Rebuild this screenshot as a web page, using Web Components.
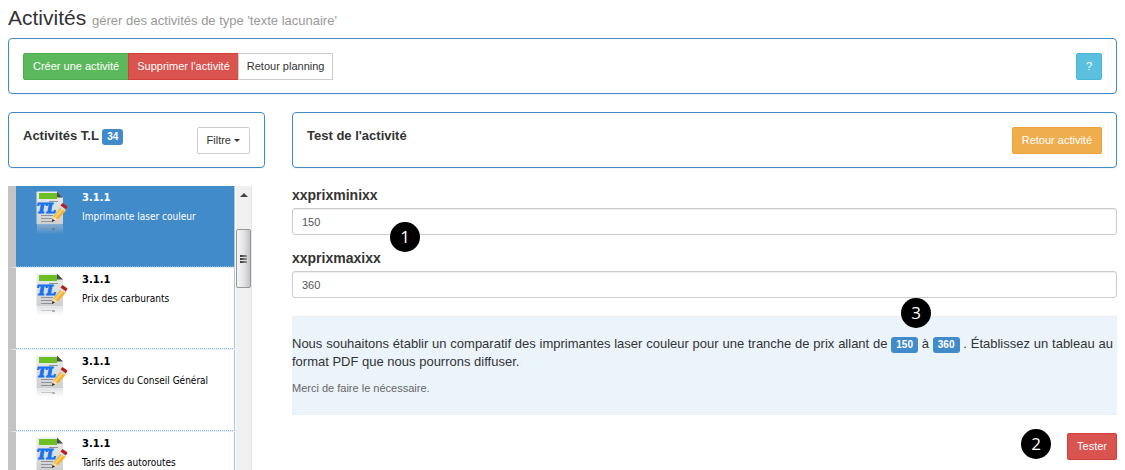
<!DOCTYPE html>
<html lang="fr">
<head>
<meta charset="utf-8">
<meta name="viewport" content="width=device-width, initial-scale=1">
<title>Activités</title>
<style>
    body {
        margin: 0;
        background-color: #fff;
        font-family: "Liberation Sans", Arial, sans-serif;
        font-size: 13px;
        line-height: 18px;
        color: #333;
    }
</style>
</head>
<body>
<app-activites></app-activites>

<script>
class AppBoton extends HTMLElement {
    constructor() {
        super();
        let shadowRoot = this.attachShadow({ mode: 'open' });
        shadowRoot.innerHTML = this.template;
    }
    get template() {
        return `
        <style>
            :host {
                display: inline-block;
                flex: none;
                --fondo: #fff;
                --borde: #ccc;
                --texto: #333;
            }
            :host([tipo="success"]) {
                --fondo: #5cb85c;
                --borde: #4cae4c;
                --texto: #fff;
            }
            :host([tipo="danger"]) {
                --fondo: #d9534f;
                --borde: #d43f3a;
                --texto: #fff;
            }
            :host([tipo="warning"]) {
                --fondo: #f0ad4e;
                --borde: #eea236;
                --texto: #fff;
            }
            :host([tipo="info"]) {
                --fondo: #5bc0de;
                --borde: #46b8da;
                --texto: #fff;
            }
            button {
                display: flex;
                align-items: center;
                gap: 3px;
                margin: 0;
                padding: 5px var(--relleno, 9px);
                border: 1px solid var(--borde);
                border-radius: var(--radio, 2px);
                background-color: var(--fondo);
                color: var(--texto);
                font: 11px/15px "Liberation Sans", Arial, sans-serif;
                white-space: nowrap;
                cursor: pointer;
            }
            button:hover {
                filter: brightness(0.93);
            }
            .caret {
                display: none;
                border-top: 3px solid currentColor;
                border-left: 3px solid transparent;
                border-right: 3px solid transparent;
            }
            :host([desplegable]) .caret {
                display: block;
            }
        </style>
        <button type="button"><span><slot></slot></span><i class="caret"></i></button>`;
    }
}
window.customElements.define("app-boton", AppBoton);

class AppGrupo extends HTMLElement {
    constructor() {
        super();
        let shadowRoot = this.attachShadow({ mode: 'open' });
        shadowRoot.innerHTML = this.template;
    }
    get template() {
        return `
        <style>
            :host {
                display: flex;
                --relleno: 8px;
            }
            ::slotted(*) {
                --radio: 0;
            }
            ::slotted(:first-child) {
                --radio: 2px 0 0 2px;
                --relleno: 9px;
            }
            ::slotted(:not(:first-child)) {
                margin-left: -1px;
            }
        </style>
        <slot></slot>`;
    }
}
window.customElements.define("app-grupo", AppGrupo);

class AppPanel extends HTMLElement {
    constructor() {
        super();
        let shadowRoot = this.attachShadow({ mode: 'open' });
        shadowRoot.innerHTML = this.template;
    }
    get template() {
        return `
        <style>
            :host {
                display: flex;
                justify-content: space-between;
                align-items: flex-start;
                padding: 14px 14px 13px;
                border: 1px solid #428bca;
                border-radius: 4px;
                background-color: #fff;
                box-shadow: 0 1px 1px rgba(0, 0, 0, 0.05);
            }
        </style>
        <slot></slot>
        <slot name="acciones"></slot>`;
    }
}
window.customElements.define("app-panel", AppPanel);

class AppEtiqueta extends HTMLElement {
    constructor() {
        super();
        let shadowRoot = this.attachShadow({ mode: 'open' });
        shadowRoot.innerHTML = this.template;
    }
    get template() {
        return `
        <style>
            :host {
                display: inline-block;
                padding: 0 5px;
                border-radius: 3px;
                background-color: #428bca;
                color: #fff;
                font-size: 10px;
                font-weight: bold;
                line-height: 16px;
                vertical-align: bottom;
            }
        </style>
        <slot></slot>`;
    }
}
window.customElements.define("app-etiqueta", AppEtiqueta);

class AppPaso extends HTMLElement {
    constructor() {
        super();
        let shadowRoot = this.attachShadow({ mode: 'open' });
        shadowRoot.innerHTML = this.template;
    }
    get template() {
        return `
        <style>
            :host {
                display: block;
                width: 30px;
                height: 30px;
                border-radius: 50%;
                background-color: #000;
                color: #fff;
                font: 17px/29px "Open Sans", "Noto Sans", sans-serif;
                text-align: center;
            }
        </style>
        <slot></slot>`;
    }
}
window.customElements.define("app-paso", AppPaso);

class AppCampo extends HTMLElement {
    constructor() {
        super();
        let shadowRoot = this.attachShadow({ mode: 'open' });
        shadowRoot.innerHTML = this.template;
    }
    get template() {
        return `
        <style>
            :host {
                display: block;
                position: relative;
            }
            label {
                display: block;
                margin-bottom: 4px;
                font-size: 14px;
                font-weight: bold;
            }
            input {
                display: block;
                box-sizing: border-box;
                width: 100%;
                height: 27px;
                margin: 0;
                padding: 5px 9px;
                border: 1px solid #ccc;
                border-radius: 3px;
                background-color: #fff;
                box-shadow: inset 0 1px 1px rgba(0, 0, 0, 0.075);
                color: #555;
                font: 11px/15px "Liberation Sans", Arial, sans-serif;
            }
            /* marcador sobre el borde del campo */
            ::slotted(app-paso) {
                position: absolute;
                left: 98px;
                bottom: -17px;
                z-index: 1;
            }
        </style>
        <label for="campo">${this.getAttribute("etiqueta")}</label>
        <input id="campo" type="text" value="${this.getAttribute("valor")}">
        <slot></slot>`;
    }
}
window.customElements.define("app-campo", AppCampo);

class IconoTexto extends HTMLElement {
    constructor() {
        super();
        let shadowRoot = this.attachShadow({ mode: 'open' });
        shadowRoot.innerHTML = this.template;
    }
    get template() {
        return `
        <style>
            :host {
                display: block;
                width: 32px;
                height: 44px;
            }
            svg {
                display: block;
            }
        </style>
        <svg width="32" height="44" viewBox="0 0 32 44" aria-hidden="true">
            <defs>
                <linearGradient id="hoja" x1="0" y1="0" x2="0" y2="1">
                    <stop offset="0" stop-color="#ececec"/>
                    <stop offset="1" stop-color="#cdcfd1"/>
                </linearGradient>
                <linearGradient id="reflejo" x1="0" y1="0" x2="0" y2="1">
                    <stop offset="0" stop-color="#c4c7ca" stop-opacity="0.5"/>
                    <stop offset="1" stop-color="#d8dadc" stop-opacity="0"/>
                </linearGradient>
            </defs>
            <path d="M1.5 0.5H21L27 6.5V32.5Q27 33.5 26 33.5H1.5Q0.5 33.5 0.5 32.5V1.5Q0.5 0.5 1.5 0.5Z" fill="url(#hoja)"/>
            <path d="M21 0.5L27 6.5H21Z" fill="#4b4f52"/>
            <rect x="3" y="2" width="18" height="6" fill="#6cc024"/>
            <g fill="#8d9397">
                <rect x="13" y="10" width="9" height="1"/>
                <rect x="5" y="24" width="12" height="1"/>
                <rect x="5" y="27" width="11" height="1"/>
                <rect x="5" y="30" width="12" height="1"/>
            </g>
            <text x="1" y="22" font-family="DejaVu Serif, serif" font-size="13" font-weight="bold" font-style="italic" fill="#1673f0" stroke="#1673f0" stroke-width="1.2">TL</text>
            <path d="M16.5 30.5L17.5 25.5L25 16L30 19.5L22 28.5Z" fill="#f5b335"/>
            <path d="M19 26.5L27 17.5" stroke="#ffd877" stroke-width="1.5"/>
            <path d="M17.5 25.5L22 28.5L16.5 30.5Z" fill="#f6ddb2"/>
            <path d="M16.5 28L19 29.5L16 31Z" fill="#222"/>
            <path d="M23.5 16.5L25.5 14L30.5 17.5L28.5 20Z" fill="#d9dbdd"/>
            <path d="M24.5 14.5L26.5 12L31.5 15.5L30 18.5Z" fill="#b51f1f"/>
            <rect x="1" y="34" width="26" height="9" fill="url(#reflejo)"/>
            <rect x="5" y="37" width="11" height="1" fill="#888d91" opacity="0.4"/>
            <rect x="16" y="37" width="3" height="2" fill="#555" opacity="0.4"/>
        </svg>`;
    }
}
window.customElements.define("icono-texto", IconoTexto);

class ActividadItem extends HTMLElement {
    constructor() {
        super();
        let shadowRoot = this.attachShadow({ mode: 'open' });
        shadowRoot.innerHTML = this.template;
    }
    get template() {
        return `
        <style>
            :host {
                display: block;
                border-left: 8px solid #c3c3c3;
                border-bottom: 1px solid #e4eef7;
                color: #000;
            }
            a {
                display: flex;
                gap: 14px;
                box-sizing: border-box;
                height: 81px;
                padding: 5px 8px 0 20px;
                border-right: 1px solid #a6c8e6;
                border-bottom: 1px dotted #8db4d8;
                color: inherit;
                font: 10px/19px "DejaVu Sans Condensed", "DejaVu Sans", Verdana, sans-serif;
                text-decoration: none;
            }
            :host([activo]) {
                color: #fff;
            }
            :host([activo]) a {
                background-color: #428bca;
            }
            strong, span {
                display: block;
            }
            strong {
                font-family: "DejaVu Sans", Verdana, sans-serif;
                line-height: 14px;
                margin-bottom: 2px;
            }
        </style>
        <a href="#">
            <icono-texto></icono-texto>
            <div>
                <strong><slot name="numero"></slot></strong>
                <span><slot></slot></span>
            </div>
        </a>`;
    }
}
window.customElements.define("actividad-item", ActividadItem);

class ActividadLista extends HTMLElement {
    constructor() {
        super();
        let shadowRoot = this.attachShadow({ mode: 'open' });
        shadowRoot.innerHTML = this.template;
    }
    get template() {
        return `
        <style>
            :host {
                display: flex;
                gap: 1px;
                margin-right: 13px;
                height: calc(100vh - 186px);
                overflow: hidden;
            }
            .items {
                flex: 1;
                min-width: 0;
            }
            .barra {
                display: flex;
                flex-direction: column;
                align-items: center;
                box-sizing: border-box;
                width: 16px;
                background-color: #f0f0f0;
                border-right: 1px solid #e6e6e6;
            }
            .arriba {
                margin: 7px 0 32px;
                border-bottom: 4px solid #444;
                border-left: 4px solid transparent;
                border-right: 4px solid transparent;
            }
            .pulgar {
                display: flex;
                flex-direction: column;
                justify-content: center;
                align-items: center;
                gap: 1px;
                box-sizing: border-box;
                width: 15px;
                height: 59px;
                border: 1px solid #979797;
                border-radius: 2px;
                background: linear-gradient(to right, #f6f6f6, #e4e4e6 50%, #c4c4c8);
            }
            .pulgar i {
                width: 7px;
                height: 2px;
                background: linear-gradient(to right, #333, #999);
            }
        </style>
        <div class="items"><slot></slot></div>
        <div class="barra" aria-hidden="true">
            <i class="arriba"></i>
            <div class="pulgar"><i></i><i></i><i></i></div>
        </div>`;
    }
}
window.customElements.define("actividad-lista", ActividadLista);

class AppTexto extends HTMLElement {
    constructor() {
        super();
        let shadowRoot = this.attachShadow({ mode: 'open' });
        shadowRoot.innerHTML = this.template;
    }
    get template() {
        return `
        <style>
            :host {
                display: block;
                position: relative;
                padding: 18px 0 17px;
                border-top: 1px solid #eee;
                border-bottom: 1px solid #eee;
                background-color: #ebf3fb;
            }
            div {
                padding-right: 4px;
                text-align: justify;
            }
            small {
                display: block;
                margin-top: 8px;
                color: #666;
                font-size: 11px;
            }
            ::slotted(app-paso) {
                position: absolute;
                top: -19px;
                right: 186px;
            }
        </style>
        <div><slot></slot></div>
        <small><slot name="nota"></slot></small>
        <slot name="paso"></slot>`;
    }
}
window.customElements.define("app-texto", AppTexto);

class AppActivites extends HTMLElement {
    constructor() {
        super();
        let shadowRoot = this.attachShadow({ mode: 'open' });
        shadowRoot.innerHTML = this.template;
    }
    get template() {
        return `
        <style>
            :host {
                display: block;
                box-sizing: border-box;
                height: 100vh;
                padding: 5px 8px 0;
                overflow: hidden;
            }
            h1 {
                margin: 0 0 7px;
                font-size: 21px;
                font-weight: normal;
                line-height: 26px;
            }
            h1 small {
                font-size: 13px;
                line-height: 18px;
                color: #999;
            }
            h2 {
                margin: 0;
                font-size: 13px;
                line-height: 18px;
            }
            .columnas {
                display: grid;
                grid-template-columns: repeat(12, minmax(0, 1fr));
                gap: 27px;
                margin-top: 18px;
            }
            .lado, .detalle {
                display: flex;
                flex-direction: column;
                gap: 18px;
            }
            .lado {
                grid-column: span 3;
            }
            .detalle {
                grid-column: span 9;
            }
            form {
                display: flex;
                flex-direction: column;
                gap: 14px;
            }
            .pie {
                display: flex;
                justify-content: flex-end;
                align-items: baseline;
                gap: 16px;
                margin-top: -4px;
            }
        </style>
        <h1>Activités <small>gérer des activités de type 'texte lacunaire'</small></h1>
        <app-panel>
            <app-grupo>
                <app-boton tipo="success">Créer une activité</app-boton>
                <app-boton tipo="danger">Supprimer l'activité</app-boton>
                <app-boton>Retour planning</app-boton>
            </app-grupo>
            <app-boton slot="acciones" tipo="info">?</app-boton>
        </app-panel>
        <div class="columnas">
            <aside class="lado">
                <app-panel>
                    <h2>Activités T.L <app-etiqueta>34</app-etiqueta></h2>
                    <app-boton slot="acciones" desplegable>Filtre</app-boton>
                </app-panel>
                <actividad-lista>
                    <actividad-item activo><span slot="numero">3.1.1</span>Imprimante laser couleur</actividad-item>
                    <actividad-item><span slot="numero">3.1.1</span>Prix des carburants</actividad-item>
                    <actividad-item><span slot="numero">3.1.1</span>Services du Conseil Général</actividad-item>
                    <actividad-item><span slot="numero">3.1.1</span>Tarifs des autoroutes</actividad-item>
                </actividad-lista>
            </aside>
            <main class="detalle">
                <app-panel>
                    <h2>Test de l'activité</h2>
                    <app-boton slot="acciones" tipo="warning">Retour activité</app-boton>
                </app-panel>
                <form>
                    <app-campo etiqueta="xxprixminixx" valor="150"><app-paso>1</app-paso></app-campo>
                    <app-campo etiqueta="xxprixmaxixx" valor="360"></app-campo>
                </form>
                <app-texto>
                    Nous souhaitons établir un comparatif des imprimantes laser couleur pour une tranche de prix allant de <app-etiqueta>150</app-etiqueta> à <app-etiqueta>360</app-etiqueta> . Établissez un tableau au format PDF que nous pourrons diffuser.
                    <span slot="nota">Merci de faire le nécessaire.</span>
                    <app-paso slot="paso">3</app-paso>
                </app-texto>
                <div class="pie">
                    <app-paso>2</app-paso>
                    <app-boton tipo="danger">Tester</app-boton>
                </div>
            </main>
        </div>`;
    }
}
window.customElements.define("app-activites", AppActivites);
</script>
</body>
</html>
